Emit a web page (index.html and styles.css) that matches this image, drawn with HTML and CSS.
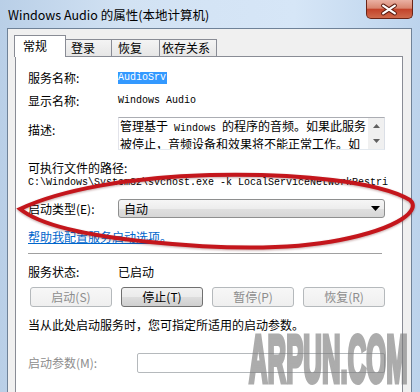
FILE: index.html
```html
<!DOCTYPE html>
<html lang="zh-CN">
	<head>
		<meta charset="utf-8"/>
		<title>Windows Audio 的属性(本地计算机)</title>
		<link rel="stylesheet" href="styles.css">
	</head>
	<body>
		<div class="window">
			<div class="titlebar">
				<span class="title">Windows Audio 的属性(本地计算机)</span>
				<div class="close-btn">
					<svg width="47" height="19" viewBox="0 0 47 19">
						<path d="M17.5 5.5 L29.5 13.5 M29.5 5.5 L17.5 13.5" stroke="#5b1c10" stroke-width="4.2" stroke-linecap="round"/>
						<path d="M17.5 5.5 L29.5 13.5 M29.5 5.5 L17.5 13.5" stroke="#ffffff" stroke-width="2.2" stroke-linecap="round"/>
					</svg>
				</div>
			</div>
			<div class="dialog">
				<div class="tabs">
					<div class="tab active">常规</div>
					<div class="tab">登录</div>
					<div class="tab">恢复</div>
					<div class="tab">依存关系</div>
				</div>
				<div class="panel">
					<div class="row row-name">
						<span class="label">服务名称:</span>
						<span class="mono selected">AudioSrv</span>
					</div>
					<div class="row row-display">
						<span class="label">显示名称:</span>
						<span class="mono">Windows Audio</span>
					</div>
					<div class="row row-desc">
						<span class="label">描述:</span>
						<div class="desc-box">
							<div class="desc-text">管理基于<span class="mono"> Windows </span>的程序的音频。如果此服务<br>被停止，音频设备和效果将不能正常工作。如</div>
							<div class="scroll">
								<svg width="7" height="4" viewBox="0 0 7 4"><path d="M0 4 L3.5 0 L7 4 Z" fill="#606060"/></svg>
								<svg width="7" height="4" viewBox="0 0 7 4"><path d="M0 0 L3.5 4 L7 0 Z" fill="#606060"/></svg>
							</div>
						</div>
					</div>
					<div class="path-label">可执行文件的路径:</div>
					<div class="path mono">C:\Windows\System32\svchost.exe -k LocalServiceNetworkRestri</div>
					<div class="row row-startup">
						<span class="label">启动类型(E):</span>
						<div class="select">
							<span>自动</span>
							<svg width="9" height="5" viewBox="0 0 9 5"><path d="M0 0 L9 0 L4.5 5 Z" fill="#000"/></svg>
						</div>
					</div>
					<a class="help-link" href="#">帮助我配置服务启动选项。</a>
					<div class="separator"></div>
					<div class="row row-status">
						<span class="label">服务状态:</span>
						<span>已启动</span>
					</div>
					<div class="buttons">
						<button class="btn" disabled>启动(S)</button>
						<button class="btn">停止(T)</button>
						<button class="btn" disabled>暂停(P)</button>
						<button class="btn" disabled>恢复(R)</button>
					</div>
					<div class="hint">当从此处启动服务时，您可指定所适用的启动参数。</div>
					<div class="row row-params">
						<span class="label disabled">启动参数(M):</span>
						<div class="param-input"></div>
					</div>
				</div>
			</div>
			<svg class="mark" width="420" height="392" viewBox="0 0 420 392">
				<path d="M20 209 C60 190 130 177 210 175 C300 173 380 182 410 200 C421 210 400 228 340 240 C290 250 220 249 150 242 C90 236 40 225 20 209 Z" fill="none" stroke="#c4161c" stroke-width="4"/>
			</svg>
			<div class="watermark">ARPUN.COM</div>
		</div>
	</body>
</html>
```

FILE: styles.css
```css
body {
	margin: 0;
	width: 420px;
	height: 392px;
	overflow: hidden;
	font-family: "Noto Sans CJK SC", sans-serif;
	font-size: 12px;
	color: #000;
}
.window {
	position: relative;
	height: 392px;
	background: linear-gradient(to right, #b9cfe7, #d2e2f3 30%, #d6e6f7 70%, #bcd3ec);
}
.titlebar {
	height: 28px;
	display: flex;
	align-items: flex-start;
	padding: 0 7px 0 8px;
}
.title {
	margin-top: 6px;
	line-height: 18px;
	font-size: 12.5px;
}
.close-btn {
	margin-left: auto;
	width: 47px;
	height: 19px;
	box-sizing: border-box;
	border: 1px solid #6a2416;
	border-top: none;
	border-radius: 0 0 5px 5px;
	background: linear-gradient(#eab1a3, #d98670 45%, #c3432a 52%, #cf6a4c);
	display: flex;
	justify-content: center;
}
.close-btn svg {
	margin-left: -1px;
}
.dialog {
	margin: 0 8px 0 7px;
	height: 364px;
	box-sizing: border-box;
	background: #f0f0f0;
	border: 1px solid #6f8298;
	border-bottom: none;
	padding: 6px 8px 0 7px;
}
.tabs {
	display: flex;
	align-items: flex-end;
	height: 22px;
	margin-bottom: -1px;
	position: relative;
	z-index: 1;
}
.tab {
	box-sizing: border-box;
	height: 17px;
	margin-bottom: 1px;
	margin-left: -1px;
	padding-left: 5px;
	line-height: 16px;
	border: 1px solid #898c95;
	border-bottom: none;
	background: linear-gradient(#f4f4f4, #e6e6e6);
	white-space: nowrap;
}
.tab:nth-child(2) { width: 47px; }
.tab:nth-child(3) { width: 49px; padding-left: 6px; }
.tab:nth-child(4) { width: 58px; padding-left: 2px; }
.tab.active {
	width: 52px;
	height: 22px;
	margin-bottom: 0;
	padding-left: 8px;
	line-height: 19px;
	background: #fff;
	position: relative;
	z-index: 2;
}
.panel {
	height: 340px;
	box-sizing: border-box;
	background: #fff;
	border: 1px solid #898c95;
	padding: 0 17px 0 12px;
	line-height: 18px;
}
.row {
	display: flex;
	align-items: center;
}
.label {
	width: 90px;
	flex: none;
}
.disabled {
	color: #8d8d8d;
}
.mono {
	font-family: "Liberation Mono", monospace;
	font-size: 10px;
	white-space: pre;
}
.selected {
	background: #3399ff;
	color: #fff;
	line-height: 12px;
	padding: 0 1px 0 0;
}
.row-name {
	margin-top: 12px;
	height: 18px;
}
.row-display {
	margin-top: 5px;
	height: 18px;
}
.row-desc {
	margin-top: 7px;
	align-items: flex-start;
}
.row-desc .label {
	margin-top: 4px;
}
.desc-box {
	width: 267px;
	height: 33px;
	box-sizing: border-box;
	border: 1px solid #abadb3;
	border-color: #abadb3 #dbdfe6 #e3e9ef #e2e3ea;
	display: flex;
}
.desc-text {
	flex: 1;
	padding-left: 1px;
	line-height: 15px;
	white-space: nowrap;
	overflow: hidden;
}
.scroll {
	width: 16px;
	flex: none;
	background: #f0f0f0;
	display: flex;
	flex-direction: column;
	align-items: center;
	justify-content: space-between;
	padding: 6px 0 6px;
	box-sizing: border-box;
}
.path-label {
	margin-top: 10px;
	line-height: 16px;
}
.path {
	width: 360px;
	line-height: 14px;
	overflow: hidden;
}
.row-startup {
	margin-top: 9px;
}
.select {
	width: 267px;
	height: 19px;
	box-sizing: border-box;
	border: 1px solid #8e8f8f;
	border-radius: 3px;
	background: linear-gradient(#f6f6f6 0%, #ededed 50%, #e0e0e0 51%, #d6d6d6 100%);
	display: flex;
	align-items: center;
	justify-content: space-between;
	padding: 0 4px 0 5px;
}
.help-link {
	display: block;
	margin-top: 11px;
	line-height: 16px;
	color: #0066cc;
	text-decoration: underline;
	width: max-content;
}
.separator {
	margin-top: 8px;
	width: 354px;
	border-top: 1px solid #a0a0a0;
	border-bottom: 1px solid #fff;
}
.row-status {
	margin-top: 8px;
	height: 18px;
}
.buttons {
	display: flex;
	gap: 9px;
	margin: 6px 0 0 2px;
}
.btn {
	width: 82px;
	height: 20px;
	padding: 0;
	font: inherit;
	line-height: 16px;
	color: #000;
	border: 1px solid #707070;
	border-radius: 3px;
	background: linear-gradient(#f2f2f2 0%, #ebebeb 50%, #dddddd 51%, #cfcfcf 100%);
}
.btn:disabled {
	color: #8d8d8d;
	border-color: #b5b9bc;
	background: linear-gradient(#f7f7f7, #efefef);
}
.hint {
	margin-top: 9px;
	line-height: 18px;
}
.row-params {
	margin-top: 19px;
}
.row-params .label {
	width: 109px;
}
.param-input {
	width: 248px;
	height: 20px;
	box-sizing: border-box;
	border: 1px solid #b5b9bc;
	border-radius: 2px;
	background: #fff;
}
.mark {
	position: absolute;
	left: 0;
	top: 0;
	pointer-events: none;
	filter: drop-shadow(0 1px 1px rgba(90, 0, 0, 0.35));
}
.watermark {
	position: absolute;
	left: 249px;
	top: 335px;
	font-family: "Liberation Sans", sans-serif;
	font-weight: bold;
	font-size: 66px;
	line-height: 48px;
	height: 48px;
	color: #7a7a7a;
	-webkit-text-stroke: 5px #7a7a7a;
	opacity: 0.62;
	transform: scaleX(0.39);
	transform-origin: left top;
	white-space: nowrap;
	pointer-events: none;
}
```
